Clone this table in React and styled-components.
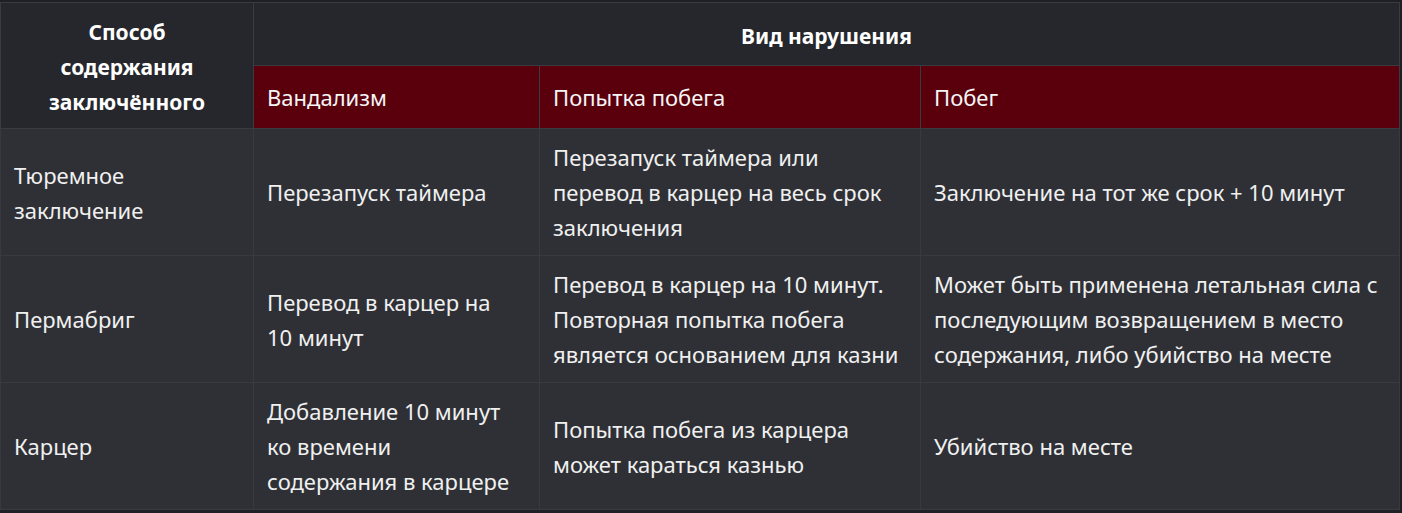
import React from "react"
import styled, { createGlobalStyle } from "styled-components"

const GlobalStyle = createGlobalStyle`
    html, body {
        margin: 0;
        padding: 0;
        background: #1f2024;
    }
`

// lines are broken the same way as in the source table
const rows = [
    {
        method: ['Тюремное', 'заключение'],
        cells: [
            ['Перезапуск таймера'],
            ['Перезапуск таймера или', 'перевод в карцер на весь срок', 'заключения'],
            ['Заключение на тот же срок + 10 минут']
        ]
    },
    {
        method: ['Пермабриг'],
        cells: [
            ['Перевод в карцер на', '10 минут'],
            ['Перевод в карцер на 10 минут.', 'Повторная попытка побега', 'является основанием для казни'],
            ['Может быть применена летальная сила с', 'последующим возвращением в место', 'содержания, либо убийство на месте']
        ]
    },
    {
        method: ['Карцер'],
        cells: [
            ['Добавление 10 минут', 'ко времени', 'содержания в карцере'],
            ['Попытка побега из карцера', 'может караться казнью'],
            ['Убийство на месте']
        ]
    }
]

const violations = ['Вандализм', 'Попытка побега', 'Побег']

const Lines = ({ lines }) => lines.map((l, i) => (
    <React.Fragment key={i}>{i > 0 && <br />}{l}</React.Fragment>
))

export default function App() {
    return (
        <Page>
            <GlobalStyle />
            <Table>
                <colgroup>
                    <col style={{ width: 253 }} />
                    <col style={{ width: 286 }} />
                    <col style={{ width: 381 }} />
                    <col />
                </colgroup>
                <thead>
                    <HeadRow>
                        <HeadCell rowSpan={2}>
                            <Lines lines={['Способ', 'содержания', 'заключённого']} />
                        </HeadCell>
                        <HeadCell colSpan={3}>Вид нарушения</HeadCell>
                    </HeadRow>
                    <HeadRow>
                        {violations.map(v => <SubHeadCell key={v}>{v}</SubHeadCell>)}
                    </HeadRow>
                </thead>
                <tbody>
                    {rows.map((r, i) => (
                        <tr key={i}>
                            <Cell><Lines lines={r.method} /></Cell>
                            {r.cells.map((c, j) => <Cell key={j}><Lines lines={c} /></Cell>)}
                        </tr>
                    ))}
                </tbody>
            </Table>
        </Page>
    )
}

const Page = styled.div`
    width: 1402px;
    height: 513px;
    padding: 2px 2px 0 0;
    box-sizing: border-box;
    background: #1f2024;
`

const Table = styled.table`
    width: 1400px;
    table-layout: fixed;
    border-collapse: collapse;
    border: 1px solid #3a3b41;
    font-family: "Noto Sans", "Open Sans", sans-serif;
    font-size: 22px;
    line-height: 35px;
    color: #f0f0f0;
    white-space: nowrap;
`

const HeadRow = styled.tr`
    height: 63px;
`

const HeadCell = styled.th`
    background: #26272c;
    color: #ffffff;
    font-weight: 700;
    font-size: 21px;
    text-align: center;
    padding: 12px 13px 8px;
    border: 1px solid #3a3b41;
    vertical-align: middle;
`

const SubHeadCell = styled.th`
    background: #5a000c;
    color: #f6f6f6;
    font-weight: 400;
    text-align: left;
    padding: 10px 13px;
    border: 1px solid #3a3b41;
    vertical-align: middle;
`

const Cell = styled.td`
    background: #2f3036;
    padding: 11px 13px 10px;
    border: 1px solid #393a40;
    vertical-align: middle;
`
